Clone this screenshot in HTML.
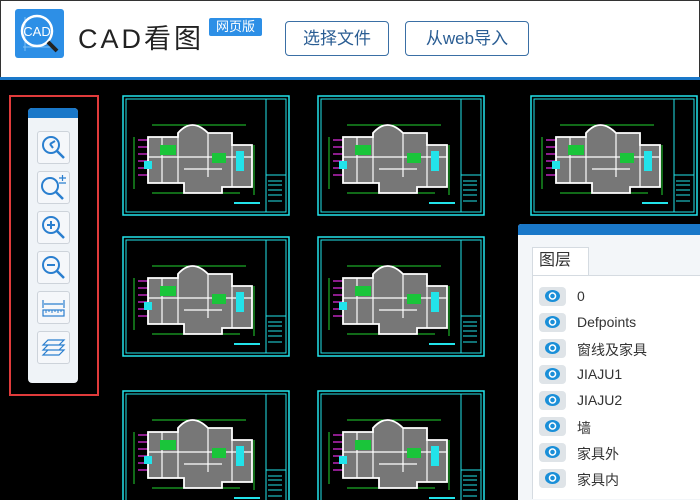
<!DOCTYPE html>
<html><head><meta charset="utf-8"><style>
*{margin:0;padding:0;box-sizing:border-box}
html,body{width:700px;height:500px;overflow:hidden}
body{background:#000;font-family:"Liberation Sans","Noto Sans CJK SC",sans-serif}
#w{position:relative;width:700px;height:500px;overflow:hidden}
.hdr{position:absolute;left:0;top:0;width:700px;height:77px;background:#fff;border:1px solid #333;border-bottom:none}
.bline{position:absolute;left:0;top:77px;width:700px;height:3px;background:#1a78c9}
.logo{position:absolute;left:14px;top:8px;width:49px;height:49px;background:#2d8fe6;border-radius:3px}
.title{position:absolute;left:77px;top:21px;font-size:27px;letter-spacing:3px;color:#222;line-height:34px}
.badge{position:absolute;left:208px;top:17px;width:53px;height:18px;background:#2d8fe6;color:#fff;font-size:13px;text-align:center;line-height:18px;border-radius:2px}
.btn{position:absolute;top:20px;height:35px;border:1px solid #3a6fa5;border-radius:4px;color:#2a5d93;font-size:17px;text-align:center;line-height:33px}
.red{position:absolute;left:9px;top:95px;width:90px;height:301px;border:2px solid #e03b3b}
.tb{position:absolute;left:28px;top:108px;width:50px;height:275px;background:#eff3f7;border-radius:4px;overflow:hidden}
.tb .top{height:10px;background:#1a78c9}
.tbtn{position:absolute;left:9px;width:33px;height:33px;border:1px solid #cdd3da;border-radius:3px;background:#f5f7fa}
.card{position:absolute;width:168px;height:121px}
.panel{position:absolute;left:518px;top:224px;width:182px;height:276px;background:#f3f6f9;border-radius:3px 0 0 0;overflow:hidden}
.panel .top{height:11px;background:#1a78c9}
.tab{position:absolute;left:14px;top:23px;width:57px;height:29px;border:1px solid #d5dbe1;border-bottom:none;background:#fff;font-size:16px;color:#333;padding:3px 0 0 6px;line-height:20px}
.list{position:absolute;left:14px;top:51px;width:170px;height:260px;background:#fff;border-top:1px solid #d5dbe1;border-left:1px solid #d5dbe1}
.row{position:absolute;left:6px;height:20px;font-size:14px;color:#333}
.eye{position:absolute;left:0;top:0;width:27px;height:19px;background:#dfe4e8;border-radius:4px}
.row span{position:absolute;left:38px;top:1px;white-space:nowrap}
.eye::after{content:"";position:absolute;left:6px;top:3px;width:15px;height:12px;border-radius:50%;background:radial-gradient(circle,#1a8fd8 0 2px,#fff 2.5px 3.5px,#1a8fd8 4px)}
</style></head><body><div id="w">
<div class="hdr">
<div class="logo"><svg width="49" height="49" viewBox="0 0 49 49"><path d="M8 38H40M10 8V42" stroke="#7fc0f5" stroke-width="1" fill="none"/><circle cx="22" cy="22" r="15" fill="none" stroke="#fff" stroke-width="2.5"/><path d="M33 33L42 42" stroke="#222" stroke-width="4"/><text x="22" y="27" font-size="13" fill="#fff" text-anchor="middle" font-family="Liberation Sans">CAD</text></svg></div>
<div class="title">CAD看图</div>
<div class="badge">网页版</div>
<div class="btn" style="left:284px;width:104px">选择文件</div>
<div class="btn" style="left:404px;width:124px">从web导入</div>
</div>
<div class="bline"></div>

<svg width="0" height="0" style="position:absolute"><defs>
<symbol id="pl" viewBox="0 0 168 121">
<rect x="1" y="1" width="166" height="119" fill="none" stroke="#22e3ea" stroke-width="1.5"/>
<rect x="4" y="4" width="140" height="113" fill="none" stroke="#22e3ea" stroke-width="1"/>
<rect x="144" y="4" width="20" height="113" fill="none" stroke="#22e3ea" stroke-width="1"/>
<path d="M144 80H164M146 86H160M146 90H160M146 95H160M146 100H160M146 106H160" stroke="#22e3ea"/>
<path d="M30 30H124M30 98H118M12 42V94M132 50V100" stroke="#22d330" stroke-width="1" fill="none"/>
<path d="M16 45H40M16 52H40M16 59H40M16 66H40M16 73H40M16 80H40" stroke="#e02ee0" stroke-width="1.2"/>
<path d="M26 42H56V38Q70 22 86 38H110V50H130V92H100V98H62V88H26Z" fill="#777" stroke="#fff" stroke-width="1.8"/>
<path d="M56 38V88M86 38V82M110 50V92M26 62H130M62 74H100M40 42V88" stroke="#fff" stroke-width="1.2"/>
<rect x="38" y="50" width="16" height="10" fill="#1ac53a"/><rect x="90" y="58" width="14" height="10" fill="#1ac53a"/>
<rect x="114" y="56" width="8" height="20" fill="#22e3ea"/><rect x="22" y="66" width="8" height="8" fill="#22e3ea"/>
<path d="M112 108H138" stroke="#22e3ea" stroke-width="2"/>
</symbol></defs></svg>

<svg class="card" style="left:122px;top:95px"><use href="#pl"/></svg>
<svg class="card" style="left:317px;top:95px"><use href="#pl"/></svg>
<svg class="card" style="left:530px;top:95px"><use href="#pl"/></svg>
<svg class="card" style="left:122px;top:236px"><use href="#pl"/></svg>
<svg class="card" style="left:317px;top:236px"><use href="#pl"/></svg>
<svg class="card" style="left:122px;top:390px;height:110px"><use href="#pl" width="168" height="121"/></svg>
<svg class="card" style="left:317px;top:390px;height:110px"><use href="#pl" width="168" height="121"/></svg>

<div class="red"></div>
<div class="tb"><div class="top"></div>
<div class="tbtn" style="top:23px"><svg width="31" height="31"><circle cx="13" cy="13" r="8" fill="none" stroke="#2a7fcf" stroke-width="2"/><path d="M19 19L26 26" stroke="#2a7fcf" stroke-width="2.5"/><path d="M12 12L17 9M12 12l3 4" stroke="#2a7fcf" stroke-width="2" fill="none"/></svg></div>
<div class="tbtn" style="top:63px"><svg width="31" height="31"><circle cx="12" cy="14" r="8" fill="none" stroke="#2a7fcf" stroke-width="2"/><path d="M18 20L25 27" stroke="#2a7fcf" stroke-width="2.5"/><path d="M21 6h7M24.5 3v6M21 11h7" stroke="#2a7fcf" stroke-width="1.2"/></svg></div>
<div class="tbtn" style="top:103px"><svg width="31" height="31"><circle cx="13" cy="13" r="8" fill="none" stroke="#2a7fcf" stroke-width="2"/><path d="M19 19L26 26" stroke="#2a7fcf" stroke-width="2.5"/><path d="M9 13h8M13 9v8" stroke="#2a7fcf" stroke-width="2"/></svg></div>
<div class="tbtn" style="top:143px"><svg width="31" height="31"><circle cx="13" cy="13" r="8" fill="none" stroke="#2a7fcf" stroke-width="2"/><path d="M19 19L26 26" stroke="#2a7fcf" stroke-width="2.5"/><path d="M9 13h8" stroke="#2a7fcf" stroke-width="2"/></svg></div>
<div class="tbtn" style="top:183px"><svg width="31" height="31"><path d="M5 8v8M26 8v8M6 12h19" stroke="#2a7fcf" stroke-width="1.2" fill="none"/><rect x="5" y="18" width="21" height="6" fill="none" stroke="#2a7fcf" stroke-width="1.2"/><path d="M8 18v3M11 18v2M14 18v3M17 18v2M20 18v3M23 18v2" stroke="#2a7fcf"/></svg></div>
<div class="tbtn" style="top:223px"><svg width="31" height="31"><path d="M10 8h16l-5 5H5zM10 13h16l-5 5H5zM10 18h16l-5 5H5z" fill="none" stroke="#2a7fcf" stroke-width="1.2"/></svg></div>
</div>

<div class="panel"><div class="top"></div>
<div class="tab">图层</div>
<div class="list" style="height:224px">
<div class="row" style="top:11px"><div class="eye"></div><span>0</span></div>
<div class="row" style="top:37px"><div class="eye"></div><span>Defpoints</span></div>
<div class="row" style="top:63px"><div class="eye"></div><span>窗线及家具</span></div>
<div class="row" style="top:89px"><div class="eye"></div><span>JIAJU1</span></div>
<div class="row" style="top:115px"><div class="eye"></div><span>JIAJU2</span></div>
<div class="row" style="top:141px"><div class="eye"></div><span>墙</span></div>
<div class="row" style="top:167px"><div class="eye"></div><span>家具外</span></div>
<div class="row" style="top:193px"><div class="eye"></div><span>家具内</span></div>
</div></div>
</div></body></html>
